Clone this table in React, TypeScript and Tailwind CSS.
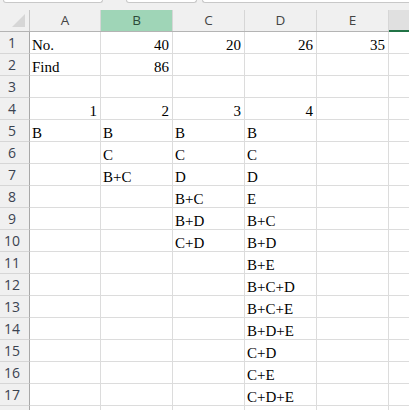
import React from "react";

const cols = ["A", "B", "C", "D", "E"];

type Cell = { v: string; r?: boolean };
const data: Record<number, (Cell | null)[]> = {
  1: [{ v: "No." }, { v: "40", r: true }, { v: "20", r: true }, { v: "26", r: true }, { v: "35", r: true }],
  2: [{ v: "Find" }, { v: "86", r: true }, null, null, null],
  3: [null, null, null, null, null],
  4: [{ v: "1", r: true }, { v: "2", r: true }, { v: "3", r: true }, { v: "4", r: true }, null],
  5: [{ v: "B" }, { v: "B" }, { v: "B" }, { v: "B" }, null],
  6: [null, { v: "C" }, { v: "C" }, { v: "C" }, null],
  7: [null, { v: "B+C" }, { v: "D" }, { v: "D" }, null],
  8: [null, null, { v: "B+C" }, { v: "E" }, null],
  9: [null, null, { v: "B+D" }, { v: "B+C" }, null],
  10: [null, null, { v: "C+D" }, { v: "B+D" }, null],
  11: [null, null, null, { v: "B+E" }, null],
  12: [null, null, null, { v: "B+C+D" }, null],
  13: [null, null, null, { v: "B+C+E" }, null],
  14: [null, null, null, { v: "B+D+E" }, null],
  15: [null, null, null, { v: "C+D" }, null],
  16: [null, null, null, { v: "C+E" }, null],
  17: [null, null, null, { v: "C+D+E" }, null],
};

const grid = "grid grid-cols-[30px_71px_72px_72px_72px_72px_1fr]";

export default function App() {
  const rows = Array.from({ length: 18 }, (_, i) => i + 1);
  return (
    <div className="w-[409px] h-[410px] overflow-hidden bg-white">
      {/* top strip */}
      <div className="h-[10px] bg-[#f0f0f0] flex pl-[3px]">
        <div className="w-[100px] h-[3px] bg-white border border-t-0 border-[#c8c8c8] rounded-b-[4px]" />
        <div className="w-[71px] h-[3px] ml-[23px] bg-white border border-t-0 border-[#c8c8c8] rounded-b-[4px]" />
        <div className="flex-1 h-[3px] ml-[5px] bg-white border border-t-0 border-r-0 border-[#c8c8c8] rounded-bl-[4px]" />
      </div>
      {/* header row */}
      <div
        className={`${grid} h-[22px] bg-[#f0f0f0] border-b border-[#b4b4b4] text-[13.5px] text-[#444]`}
        style={{ fontFamily: "'Open Sans', 'Liberation Sans', sans-serif" }}
      >
        <div className="relative border-r border-[#c6c6c6]">
          <div className="absolute left-[12px] top-[4px] w-0 h-0 border-l-[13px] border-l-transparent border-b-[13px] border-b-[#d6d6d6]" />
        </div>
        {cols.map((c) => (
          <div
            key={c}
            className={`flex items-center justify-center border-r border-[#d6d6d6] ${
              c === "B" ? "bg-[#9fd5b7] text-[#2d4a3a]" : ""
            }`}
          >
            {c}
          </div>
        ))}
        <div className="bg-[#e0e0e0] border-b-2 border-[#217346] -mb-px" />
      </div>
      {/* body rows */}
      {rows.map((r) => (
        <div key={r} className={`${grid} h-[22px]`}>
          <div
            className="bg-[#f0f0f0] border-r border-[#a8a8a8] border-b border-b-[#d6d6d6] flex items-center justify-center pr-[5px] text-[14px] text-[#3b4350]"
            style={{ fontFamily: "'Open Sans', 'Liberation Sans', sans-serif" }}
          >
            {r <= 17 ? r : ""}
          </div>
          {cols.map((c, ci) => {
            const cell = data[r]?.[ci];
            return (
              <div
                key={c}
                className={`border-r border-b border-[#dcdcdc] flex items-end overflow-visible whitespace-nowrap text-[15px] leading-[16px] text-black ${
                  cell?.r ? "justify-end pr-[3px]" : "pl-[2px]"
                }`}
                style={{ fontFamily: "'Liberation Serif', 'Noto Sans CJK TC', serif" }}
              >
                {cell ? cell.v : ""}
              </div>
            );
          })}
          <div className="border-b border-[#dcdcdc]" />
        </div>
      ))}
    </div>
  );
}
